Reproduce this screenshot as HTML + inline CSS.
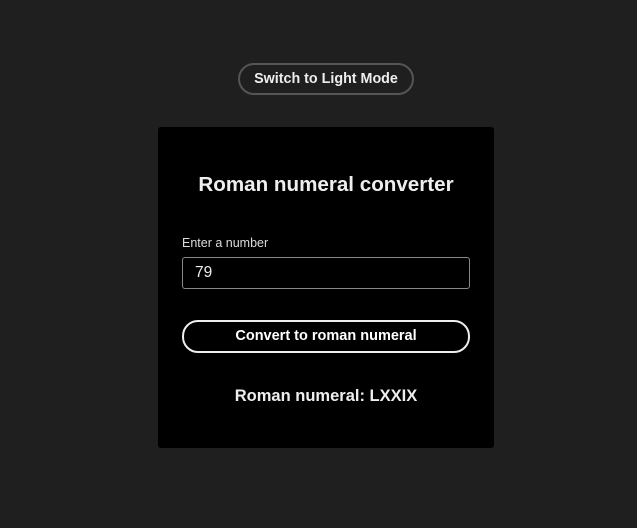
<!DOCTYPE html>
<html><head><style>
html,body{margin:0;padding:0;}
body{width:637px;height:528px;background:#1f1f1f;font-family:"Liberation Sans",sans-serif;color:#eee;position:relative;overflow:hidden;}
.toggle{position:absolute;left:238px;top:63px;width:172px;height:28px;border:2px solid #555;border-radius:16px;box-sizing:content-box;text-align:center;line-height:28px;font-size:14.3px;font-weight:bold;color:#eee;}
.card{position:absolute;left:158px;top:127px;width:336px;height:321px;background:#000;border-radius:3px;}
h1{position:absolute;left:0;width:336px;top:46px;margin:0;text-align:center;font-size:20.6px;font-weight:bold;color:#eee;}
.lbl{position:absolute;left:24px;top:109px;font-size:12.5px;color:#ddd;}
.inp{position:absolute;left:24px;top:130px;height:30px;border:1px solid #888;border-radius:3px;font-size:15.5px;line-height:30px;padding-left:12px;box-sizing:content-box;width:274px;}
.btn{position:absolute;left:24px;top:193px;width:284px;height:29px;border:2px solid #eee;border-radius:16px;text-align:center;line-height:29px;font-size:14.5px;font-weight:bold;color:#fff;}
.res{position:absolute;left:0;width:336px;top:260px;text-align:center;font-size:16.5px;font-weight:bold;color:#eee;}
</style></head><body>
<div class="toggle">Switch to Light Mode</div>
<div class="card">
<h1>Roman numeral converter</h1>
<div class="lbl">Enter a number</div>
<div class="inp">79</div>
<div class="btn">Convert to roman numeral</div>
<div class="res">Roman numeral: LXXIX</div>
</div>
</body></html>
